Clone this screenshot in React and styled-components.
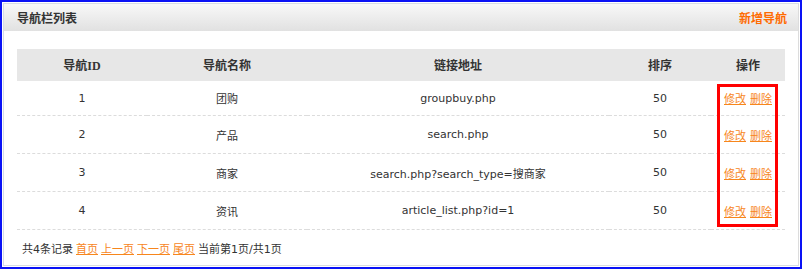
import React from "react";
import styled, { createGlobalStyle } from "styled-components";

const GlobalStyle = createGlobalStyle`
  html, body {
    margin: 0;
    padding: 0;
    background: #fff;
  }
  body {
    font-family: "DejaVu Sans", "Noto Sans CJK SC", sans-serif;
    font-size: 11px;
    color: #333;
  }
`;

const Frame = styled.div`
  width: 802px;
  height: 269px;
  box-sizing: border-box;
  border: 2px solid #0a12f5;
  padding: 1px;
  overflow: hidden;
`;

const Panel = styled.div`
  height: 100%;
  box-sizing: border-box;
  border: 1px solid #d5dce6;
  border-right-color: #dcdcdc;
  display: flex;
  flex-direction: column;
`;

const PanelHead = styled.div`
  height: 27px;
  flex: none;
  display: flex;
  align-items: center;
  justify-content: space-between;
  padding: 0 11px 0 13px;
  background: linear-gradient(#f8f8f8, #e1e1e1);
  font-family: "Liberation Serif", "Noto Sans CJK SC", serif;
  font-size: 12px;
  font-weight: bold;
`;

const Title = styled.span`
  color: #333;
`;

const AddLink = styled.a`
  color: #ff6a00;
  text-decoration: none;
`;

const PanelBody = styled.div`
  position: relative;
  padding: 18px 11px 0 13px;
`;

const Table = styled.table`
  width: 768px;
  border-collapse: separate;
  border-spacing: 0;
  table-layout: fixed;
`;

const Th = styled.th`
  height: 32px;
  padding: 0;
  background: #e7e7e7;
  font-family: "Liberation Serif", "Noto Sans CJK SC", serif;
  font-size: 12px;
  font-weight: bold;
  color: #333;
  text-align: center;
`;

const Td = styled.td`
  height: ${(p) => (p.$first ? 34 : 37)}px;
  padding: 0;
  text-align: center;
  border-bottom: 1px dashed #dcdcdc;
  color: #333;
`;

const OpLink = styled.a`
  color: #f7861c;
  text-decoration: underline;
  margin: 0 2px;
`;

const Pager = styled.div`
  height: 35px;
  display: flex;
  align-items: center;
  gap: 3px;
  padding-left: 5px;
  border-bottom: 1px dashed #dcdcdc;
`;

const PageLink = styled.a`
  color: #f7861c;
  text-decoration: underline;
`;

const Mark = styled.div`
  position: absolute;
  left: 713px;
  top: 53px;
  width: 61px;
  height: 143px;
  box-sizing: border-box;
  border: 3px solid #f00;
  pointer-events: none;
`;

const cols = [130, 160, 302, 102, 74];

const rows = [
  { id: 1, name: "团购", url: "groupbuy.php", sort: 50 },
  { id: 2, name: "产品", url: "search.php", sort: 50 },
  { id: 3, name: "商家", url: "search.php?search_type=搜商家", sort: 50 },
  { id: 4, name: "资讯", url: "article_list.php?id=1", sort: 50 },
];

export default function App() {
  return (
    <>
      <GlobalStyle />
      <Frame>
        <Panel>
          <PanelHead>
            <Title>导航栏列表</Title>
            <AddLink href="#">新增导航</AddLink>
          </PanelHead>
          <PanelBody>
            <Table>
              <colgroup>
                {cols.map((w, i) => (
                  <col key={i} style={{ width: w }} />
                ))}
              </colgroup>
              <thead>
                <tr>
                  <Th>导航ID</Th>
                  <Th>导航名称</Th>
                  <Th>链接地址</Th>
                  <Th>排序</Th>
                  <Th>操作</Th>
                </tr>
              </thead>
              <tbody>
                {rows.map((r, i) => (
                  <tr key={r.id}>
                    <Td $first={i === 0}>{r.id}</Td>
                    <Td $first={i === 0}>{r.name}</Td>
                    <Td $first={i === 0}>{r.url}</Td>
                    <Td $first={i === 0}>{r.sort}</Td>
                    <Td $first={i === 0}>
                      <OpLink href="#">修改</OpLink>
                      <OpLink href="#">删除</OpLink>
                    </Td>
                  </tr>
                ))}
              </tbody>
            </Table>
            <Pager>
              <span>共4条记录</span>
              <PageLink href="#">首页</PageLink>
              <PageLink href="#">上一页</PageLink>
              <PageLink href="#">下一页</PageLink>
              <PageLink href="#">尾页</PageLink>
              <span>当前第1页/共1页</span>
            </Pager>
            <Mark />
          </PanelBody>
        </Panel>
      </Frame>
    </>
  );
}
